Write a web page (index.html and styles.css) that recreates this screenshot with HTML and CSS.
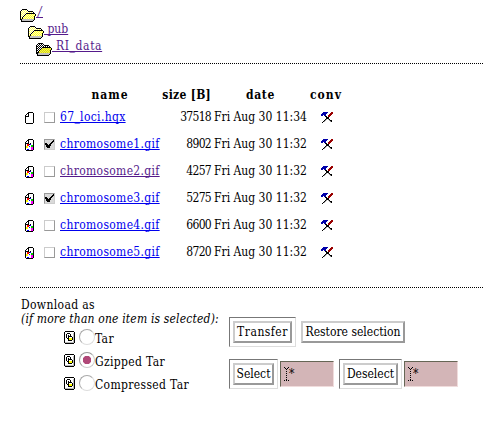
FILE: index.html
```html
<!DOCTYPE html>
<html lang="en">
<head>
<meta charset="utf-8">
<title>/pub/RI_data</title>
<link rel="stylesheet" href="styles.css">
</head>
<body>
<svg class="defs" width="0" height="0" aria-hidden="true">
  <defs>
    <pattern id="fill-yellow" width="2" height="2" patternUnits="userSpaceOnUse"><path fill="#ffffef" d="M0 0h2v2H0z"/><path fill="#ffff60" d="M0 0h1v1H0zM1 1h1v1H1z"/></pattern>
    <pattern id="fill-flap" width="2" height="2" patternUnits="userSpaceOnUse"><path fill="#ffffb0" d="M0 0h2v2H0z"/><path fill="#ffff30" d="M0 0h1v1H0zM1 1h1v1H1z"/></pattern>
    <pattern id="fill-olive" width="2" height="2" patternUnits="userSpaceOnUse"><path fill="#ffff30" d="M0 0h2v2H0z"/><path fill="#cccc30" d="M0 0h1v1H0zM1 1h1v1H1z"/></pattern>
    <pattern id="fill-dark" width="2" height="2" patternUnits="userSpaceOnUse"><path fill="#fff" d="M0 0h2v2H0z"/><path d="M0 0h1v1H0zM1 1h1v1H1z"/></pattern>
    <symbol id="flap" viewBox="0 0 16 13">
      <path fill="#c0c0c0" d="M2 10h12v2H2z"/>
      <path fill="#fff" d="M3 9h1v1H3z"/>
      <path d="M6 4h9v1H6zM5 5h1v1H5zM4 6h1v1H4zM3 7h1v1H3zM2 8h1v2H2zM15 5h1v2h-1zM14 7h1v4h-1zM13 11h1v1h-1zM1 12h12v1H1zM1 10h1v2H1z"/>
    </symbol>
    <symbol id="folder" viewBox="0 0 16 13">
      <path fill="url(#fill-yellow)" d="M2 1h5v1h7v10H1V2h1z"/>
      <path d="M2 0h5v1H2zM1 1h1v1H1zM7 1h1v1H7zM8 2h5v1H8zM0 2h1v9H0zM13 3h1v1h-1z"/>
      <use href="#flap" width="16" height="13"/>
      <path fill="url(#fill-flap)" d="M6 5h9v2h-1v3H3V8h1V7h1V6h1z"/>
    </symbol>
    <symbol id="folder-open" viewBox="0 0 16 13">
      <path fill="url(#fill-dark)" d="M2 1h5v1h7v10H1V2h1z"/>
      <path d="M2 0h5v1H2zM1 1h1v1H1zM7 1h1v1H7zM8 2h5v1H8zM0 2h1v9H0zM13 3h1v1h-1z"/>
      <use href="#flap" width="16" height="13"/>
      <path fill="url(#fill-olive)" d="M6 5h9v2h-1v3H3V8h1V7h1V6h1z"/>
    </symbol>
    <symbol id="page" viewBox="0 0 10 12">
      <path fill="#fff" d="M3 1h5v10H1V4z"/>
      <path d="M3 0h5v1H3zM2 1h1v1H2zM1 2h1v1H1zM0 3h1v8H0zM1 11h7v1H1zM8 1h1v10H8zM1 4h3v1H1zM3 1h1v3H3z"/>
    </symbol>
    <symbol id="image" viewBox="0 0 10 12">
      <use href="#page" width="10" height="12"/>
      <path fill="#f00" d="M2 5h2v2H2z"/>
      <path d="M5 4h1v1H5zM4 5h1v1H4z"/>
      <path fill="#0c0" d="M6 6h2v2H6z"/><path fill="#ff0" d="M1 7h2v2H1z"/>
      <path fill="#00f" d="M5 5h1v1H5zM4 7h1v1H4zM2 10h2v1H2z"/><path fill="#f0f" d="M6 8h2v3H6z"/>
    </symbol>
    <symbol id="tools" viewBox="0 0 13 11">
      <path fill="#00a" d="M2 0h5v1H6v1H5v2H3V3H2v1H0V2h1V1h1z"/>
      <path fill="#900" d="M10 0h2v2h-1v1h-1v1H9v1H7V3h1V2h1V1h1z"/>
      <path d="M4 4h2v1H4zM5 5h3v1H5zM5 6h3v1H5zM4 7h1v1H4zM3 8h1v1H3zM2 9h1v1H2zM1 10h1v1H1zM8 7h1v1H8zM9 8h2v1H9zM10 9h1v1h-1z"/>
      <path fill="#999" d="M5 7h1v1H5zM4 8h1v1H4zM3 9h1v1H3zM7 7h1v1H7zM8 8h1v1H8zM9 9h1v1H9z"/>
    </symbol>
    <symbol id="archive" viewBox="0 0 12 13">
      <path d="M1 0h9v1h1v11h-1v1H1v-1H0V1h1z"/><path fill="#fff" d="M1 1h9v11H1z"/>
      <path fill="#bbb" d="M9 2h1v10H1v-1h8z"/>
      <path d="M3 2h3v1H3zM2 3h1v4H2zM6 3h1v2H6zM3 7h1v1H3zM4 4h1v2H4zM5 5h3v1H5zM8 6h1v3H8zM4 6h1v4H4zM5 9h3v1H5z"/>
      <path fill="#ff0" d="M5 7h3v2H5z"/>
    </symbol>
    <symbol id="check" viewBox="0 0 9 9">
      <path d="M0 3h2v1h1v1h1V4h1V3h1V2h1V1h1V0h1v2H8v1H7v1H6v2H5v2H2V7H1V5H0z"/>
    </symbol>
    <symbol id="caret" viewBox="0 0 5 14">
      <path d="M0 0h1v1H0zM4 0h1v1H4zM1 1h1v1H1zM3 1h1v1H3zM2 2h1v1H2zM2 4h1v1H2zM2 6h1v1H2zM2 8h1v1H2zM2 10h1v1H2zM2 12h1v1H2zM0 13h1v1H0zM4 13h1v1H4zM2 13h1v1H2z"/>
    </symbol>
  </defs>
</svg>

<nav class="path">
  <div class="level"><svg class="folder"><use href="#folder"/></svg><a class="visited root" href="#">/</a></div>
  <div class="level pub"><svg class="folder"><use href="#folder"/></svg><a class="visited" href="#">&nbsp;pub</a></div>
  <div class="level data"><svg class="folder"><use href="#folder-open"/></svg><a class="visited" href="#">&nbsp;RI_data</a></div>
</nav>
<div class="rule"></div>

<div class="files">
  <div class="row head"><b class="name">name</b><b class="size">size [B]</b><b class="date">date</b><b class="conv">conv</b></div>
  <div class="row"><svg class="doc"><use href="#page"/></svg><i class="box"></i><a class="name" href="#">67_loci.hqx</a><span class="size">37518</span><span class="date">Fri Aug 30 11:34</span><svg class="tools"><use href="#tools"/></svg></div>
  <div class="row"><svg class="doc"><use href="#image"/></svg><i class="box on"><svg><use href="#check"/></svg></i><a class="name" href="#">chromosome1.gif</a><span class="size">8902</span><span class="date">Fri Aug 30 11:32</span><svg class="tools"><use href="#tools"/></svg></div>
  <div class="row"><svg class="doc"><use href="#image"/></svg><i class="box"></i><a class="name visited" href="#">chromosome2.gif</a><span class="size">4257</span><span class="date">Fri Aug 30 11:32</span><svg class="tools"><use href="#tools"/></svg></div>
  <div class="row"><svg class="doc"><use href="#image"/></svg><i class="box on"><svg><use href="#check"/></svg></i><a class="name" href="#">chromosome3.gif</a><span class="size">5275</span><span class="date">Fri Aug 30 11:32</span><svg class="tools"><use href="#tools"/></svg></div>
  <div class="row"><svg class="doc"><use href="#image"/></svg><i class="box"></i><a class="name" href="#">chromosome4.gif</a><span class="size">6600</span><span class="date">Fri Aug 30 11:32</span><svg class="tools"><use href="#tools"/></svg></div>
  <div class="row"><svg class="doc"><use href="#image"/></svg><i class="box"></i><a class="name" href="#">chromosome5.gif</a><span class="size">8720</span><span class="date">Fri Aug 30 11:32</span><svg class="tools"><use href="#tools"/></svg></div>
</div>
<div class="rule"></div>

<form class="download">
  <div class="formats">
    <div class="line">Download as</div>
    <div class="line hint">(if more than one item is selected):</div>
    <div class="format"><svg class="archive"><use href="#archive"/></svg><i class="radio"></i><span>Tar</span></div>
    <div class="format"><svg class="archive"><use href="#archive"/></svg><i class="radio on"></i><span>Gzipped Tar</span></div>
    <div class="format"><svg class="archive"><use href="#archive"/></svg><i class="radio"></i><span>Compressed Tar</span></div>
  </div>
  <div class="actions">
    <div class="group"><div class="frame"><div class="button transfer">Transfer</div></div><div class="button restore">Restore selection</div></div>
    <div class="group"><div class="frame"><div class="button select">Select</div></div><div class="field"><svg><use href="#caret"/></svg><span>*</span></div><div class="frame second"><div class="button deselect">Deselect</div></div><div class="field"><svg><use href="#caret"/></svg><span>*</span></div></div>
  </div>
</form>
</body>
</html>
```

FILE: styles.css
```css
* { box-sizing: border-box; }
body { margin: 0; width: 483px; height: 426px; overflow: hidden; background: #fff; color: #000; font: 12px/16px "DejaVu Serif Condensed", "DejaVu Serif", serif; white-space: nowrap; }
svg { display: block; flex: none; shape-rendering: crispEdges; }
.defs { position: absolute; }
a { color: #00e; text-decoration: underline; text-decoration-thickness: 1px; text-underline-offset: 1px; text-decoration-skip-ink: none; }
a.visited { color: #551a8b; }

.path { height: 63px; padding: 4px 0 0 20px; }
.level { display: flex; height: 17px; }
.level.pub { margin-left: 8px; }
.level.data { margin-left: 16px; letter-spacing: 0.6px; }
.folder { width: 16px; height: 13px; margin-top: 5px; }
.root { width: 7px; padding-left: 2px; text-decoration: none; border-bottom: 1px solid #551a8b; height: 14px; font-style: italic; }

.rule { height: 1px; margin-left: 20px; background: repeating-linear-gradient(90deg, #000 0 1px, #fff 1px 2px); }

.files { height: 223px; padding: 22px 0 0 25px; }
.row { display: flex; align-items: center; height: 27px; line-height: 14px; }
.row > span, .row > a { padding-bottom: 1px; }
.row.head { height: 17px; margin-bottom: 1px; }
.doc { width: 10px; height: 12px; margin-right: 9px; }
.box { width: 11px; height: 11px; margin-right: 5px; border: 1px solid; border-color: #ccc #999 #999 #ccc; }
.box.on { background: #d9d9d9; border-color: #999 #ccc #ccc #999; }
.box svg { width: 9px; height: 9px; }
.name { width: 100px; letter-spacing: 0.33px; }
.size { width: 51px; text-align: right; letter-spacing: -0.7px; }
.date { width: 93px; margin: 0 14px 0 3px; }
.tools { width: 13px; height: 11px; }
.head .name { margin-left: 35px; text-align: center; letter-spacing: 1px; }
.head .size { letter-spacing: 0.3px; }
.head .date { text-align: center; margin-right: 3px; letter-spacing: 0.6px; }
.head .conv { letter-spacing: 1px; }

.download { display: flex; padding: 10px 0 0 21px; }
.formats { width: 208px; letter-spacing: 0.35px; }
.line { height: 14px; line-height: 14px; }
.hint { font-style: italic; letter-spacing: 0.17px; }
.format { display: flex; height: 23px; padding: 3px 0 0 43px; }
.archive { width: 12px; height: 13px; margin: 2px 3px 0 0; }
.radio { width: 16px; height: 16px; border: 1px solid; border-color: #aaa #ddd #ddd #aaa; border-radius: 50%; }
.radio.on { border-color: #999 #ccc #ccc #999; background: radial-gradient(circle, #b04878 0 4px, #fff 4.5px); }
.format span { padding-top: 2px; }

.actions { padding-top: 19px; }
.group { display: flex; align-items: center; height: 30px; margin-bottom: 12px; }
.frame { height: 30px; padding: 3px; border: 1px solid; border-color: #777 #ddd #ddd #777; }
.button { height: 22px; line-height: 18px; text-align: center; border: 2px solid; border-color: #ccc #999 #999 #ccc; }
.transfer { width: 59px; letter-spacing: 0.5px; }
.restore { width: 104px; margin-left: 5px; }
.select { width: 41px; }
.deselect { width: 55px; }
.second { margin-left: 5px; }
.field { display: flex; width: 54px; height: 26px; margin-left: 2px; padding: 5px 0 0 3px; background: #d3b5b7; border: 1px solid; border-color: #665 #f0dcdc #f0dcdc #665; }
.field svg { width: 5px; height: 14px; }
.field span { line-height: 14px; }
```
